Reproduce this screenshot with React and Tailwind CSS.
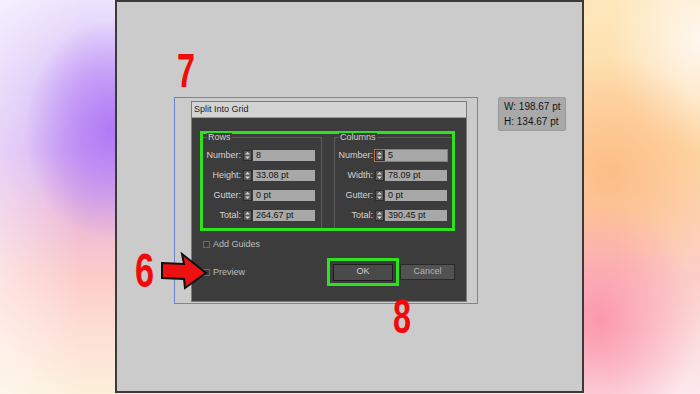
import React from "react";

const rows = [
  { label: "Number:", value: "8" },
  { label: "Height:", value: "33.08 pt" },
  { label: "Gutter:", value: "0 pt" },
  { label: "Total:", value: "264.67 pt" },
];

const columns = [
  { label: "Number:", value: "5", focused: true },
  { label: "Width:", value: "78.09 pt" },
  { label: "Gutter:", value: "0 pt" },
  { label: "Total:", value: "390.45 pt" },
];

const Spinner = () => (
  <div className="w-[9px] h-[11px] bg-[#5a5a5a] border border-[#2c2c2c] flex items-center justify-center">
    <svg width="7" height="9" viewBox="0 0 7 9">
      <path d="M3.5 1 L6 3.5 L1 3.5 Z" fill="#d6d6d6" />
      <path d="M3.5 8 L6 5.5 L1 5.5 Z" fill="#d6d6d6" />
    </svg>
  </div>
);

const Field = ({ label, value, focused }) => (
  <div className="flex items-center h-[13px]">
    <span className="w-[38px] text-right text-[9px] text-[#d4d4d4] leading-none">{label}</span>
    <div
      className={`ml-[1px] flex items-center border ${
        focused ? "border-[#c0702e]" : "border-transparent"
      }`}
    >
      <Spinner />
      <div className="ml-[1px] w-[62px] h-[11px] bg-[#a8a8a8] text-[#161616] text-[9px] leading-[11px] pl-[3px]">
        {value}
      </div>
    </div>
  </div>
);

const Group = ({ title, items, className }) => (
  <div className={`relative mt-[3px] border-t border-[#5c5c5c] ${className}`}>
    <span className="absolute -top-[5px] left-[4px] px-[1px] bg-[#3c3c3c] text-[9px] leading-[8px] text-[#cfcfcf]">
      {title}
    </span>
    <div className="flex flex-col gap-[7px] pt-[11px]">
      {items.map((f, i) => (
        <Field key={i} {...f} />
      ))}
    </div>
  </div>
);

const Check = ({ label }) => (
  <div className="flex items-center ml-[3px]">
    <div className="w-[7px] h-[7px] border border-[#6a6a6a] bg-[#3a3a3a]" />
    <span className="ml-[3px] text-[9px] text-[#bdbdbd] leading-none">{label}</span>
  </div>
);

const App = () => {
  return (
    <div className="w-[700px] h-[394px] flex font-['Liberation_Sans',Arial,sans-serif] overflow-hidden bg-[#fbe6e6]">
      <div className="w-[115px] h-full bg-[radial-gradient(ellipse_85px_110px_at_110px_130px,#b07af6,transparent),linear-gradient(to_right,rgba(255,255,255,0.45),transparent_70%),linear-gradient(to_bottom,#ece3fc_0%,#d8bff8_22%,#d2acf3_38%,#ecbad8_55%,#fcccc9_70%,#fddfd6_85%,#fcf0da_100%)]" />

      <div className="relative w-[469px] h-[393px] border-2 border-[#3a3a3a] bg-[#cbcbcb] flex items-start pt-[95px] pl-[57px]">
        <div className="w-[304px] h-[207px] border border-[#6c83c9] pt-[3px] pl-[16px]">
          <div className="w-[276px] h-[201px] border border-[#7c7c7c] bg-[#3c3c3c] flex flex-col">
            <div className="h-[16px] bg-[#d3d3d3] border-b border-[#9a9a9a] flex items-center pl-[2px] text-[9px] text-[#1e1e1e]">
              Split Into Grid
            </div>
            <div className="flex-1 pl-[8px] pr-[10px] pt-[13px]">
              <div className="w-[255px] h-[100px] border-[3px] border-[#2ee21d] flex">
                <Group title="Rows" items={rows} className="w-[119px] border-r" />
                <Group title="Columns" items={columns} className="ml-[12px] flex-1 border-l" />
              </div>
              <div className="mt-[8px] h-[10px] flex items-center">
                <Check label="Add Guides" />
              </div>
              <div className="mt-[9px] h-[28px] flex items-center">
                <Check label="Preview" />
                <div className="ml-auto mr-[1px] flex items-center">
                  <div className="w-[72px] h-[28px] border-[3px] border-[#2ee21d] flex items-center justify-center">
                    <div className="w-[60px] h-[17px] bg-[#4a4a4a] border border-[#1c1c1c] flex items-center justify-center text-[9px] text-[#d0d0d0]">
                      OK
                    </div>
                  </div>
                  <div className="ml-[1px] w-[55px] h-[16px] bg-[#525252] border border-[#2a2a2a] flex items-center justify-center text-[9px] text-[#b3b3b3]">
                    Cancel
                  </div>
                </div>
              </div>
            </div>
          </div>
        </div>

        <div className="ml-[20px] w-[68px] h-[34px] bg-[#a9a9a9] border border-[#9a9a9a] rounded-[2px] flex flex-col justify-center pl-[5px] gap-[4px] text-[10px] leading-[11px] text-[#141414]">
          <span>W: 198.67 pt</span>
          <span>H: 134.67 pt</span>
        </div>

        <span className="absolute left-[60px] top-[44px] text-[49px] leading-none font-bold text-[#f20a0a] scale-x-[0.66] origin-left">
          7
        </span>
        <span className="absolute left-[18px] top-[244px] text-[49px] leading-none font-bold text-[#f20a0a] scale-x-[0.7] origin-left">
          6
        </span>
        <span className="absolute left-[276px] top-[290px] text-[49px] leading-none font-bold text-[#f20a0a] scale-x-[0.66] origin-left">
          8
        </span>
        <svg className="absolute left-[43px] top-[250px]" width="48" height="38" viewBox="0 0 48 38">
          <polygon
            points="2,11 24,12 22,2 46,21 25,36 24,27 2,26"
            fill="#ee1111"
            stroke="#111"
            strokeWidth="2"
            strokeLinejoin="miter"
          />
        </svg>
      </div>

      <div className="flex-1 h-full bg-[radial-gradient(ellipse_100px_120px_at_15px_320px,#fb97ad,transparent),radial-gradient(ellipse_110px_120px_at_25px_175px,#fdbd88,transparent),radial-gradient(ellipse_90px_110px_at_115px_40px,#fff6ee,transparent),linear-gradient(to_bottom,#fde8bb,#fdd7a2_40%,#fccdc8_70%,#fbe9ee)]" />
    </div>
  );
};

export default App;
